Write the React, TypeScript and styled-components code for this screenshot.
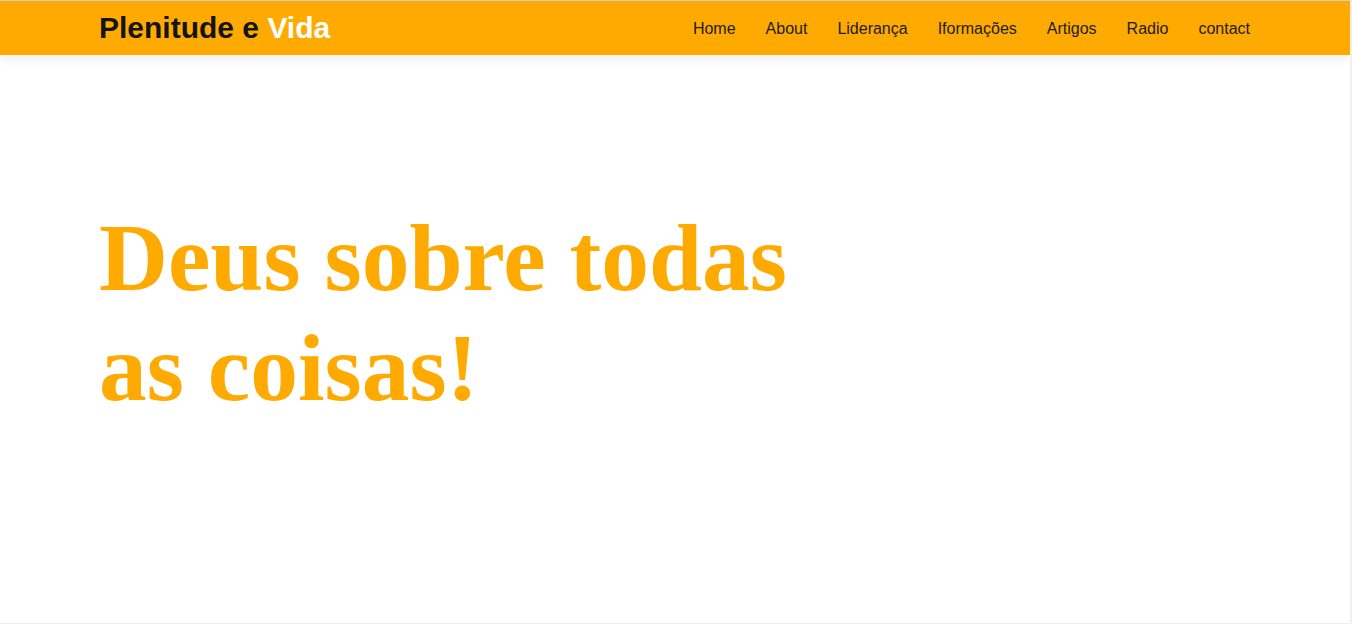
import React from "react";
import styled, { createGlobalStyle } from "styled-components";

const Global = createGlobalStyle`
  html, body { margin: 0; padding: 0; background: #fff; }
  * { box-sizing: border-box; }
`;

const Frame = styled.div`
  width: 1352px;
  height: 624px;
  border-top: 1px solid #cfcfcf;
  border-right: 2px solid #efefef;
  border-bottom: 1px solid #efefef;
  background: #fff;
  overflow: hidden;
  display: flex;
  flex-direction: column;
`;

const Header = styled.header`
  height: 54px;
  background: #ffaa00;
  display: flex;
  align-items: center;
  justify-content: space-between;
  padding: 0 100px 0 98px;
  box-shadow: 0 3px 12px rgba(0, 0, 0, 0.07);
  position: relative;
  z-index: 1;
`;

const Logo = styled.div`
  font-family: "Liberation Sans", Arial, sans-serif;
  font-weight: 700;
  font-size: 30px;
  color: #141414;
  padding-left: 1px;
`;

const LogoAccent = styled.span`
  color: #fff;
`;

const Nav = styled.nav`
  display: flex;
  align-items: center;
  gap: 30px;
  padding-top: 1px;
`;

const NavLink = styled.a`
  font-family: "Liberation Sans", Arial, sans-serif;
  font-size: 16px;
  color: #1c1c1c;
  text-decoration: none;
  cursor: pointer;
`;

const Hero = styled.section`
  flex: 1;
  padding: 148px 0 0 99px;
`;

const Title = styled.h1`
  margin: 0;
  font-family: "Liberation Serif", "Times New Roman", serif;
  font-weight: 700;
  font-size: 95.5px;
  line-height: 110px;
  color: #ffaa00;
`;

const links = ["Home", "About", "Liderança", "Iformações", "Artigos", "Radio", "contact"];

export default function App() {
  return (
    <>
      <Global />
      <Frame>
        <Header>
          <Logo>
            Plenitude e <LogoAccent>Vida</LogoAccent>
          </Logo>
          <Nav>
            {links.map((l) => (
              <NavLink key={l}>{l}</NavLink>
            ))}
          </Nav>
        </Header>
        <Hero>
          <Title>
            Deus sobre todas
            <br />
            as coisas!
          </Title>
        </Hero>
      </Frame>
    </>
  );
}
